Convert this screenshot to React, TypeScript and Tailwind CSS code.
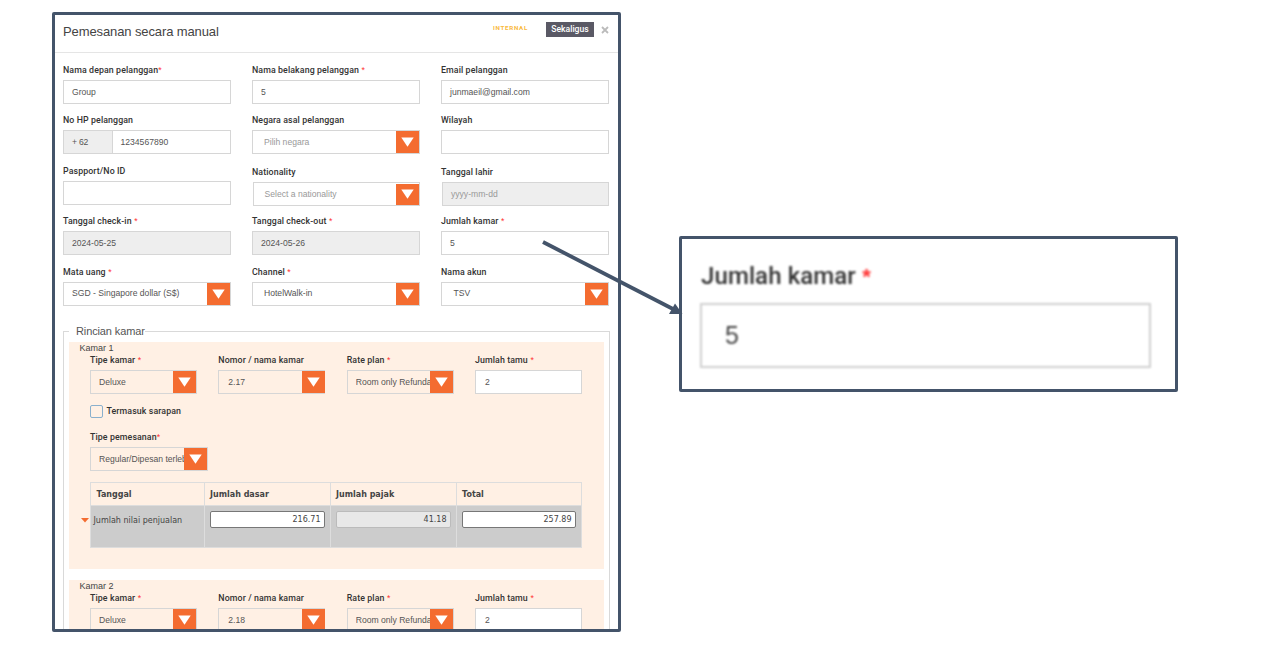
import type { ReactNode } from 'react'

interface IFieldProps {
  label: string
  star?: string
  className?: string
  children: ReactNode
}

interface IBoxProps {
  value?: string
  disabled?: boolean
  placeholder?: boolean
  className?: string
}

function Label({ label, star }: { label: string; star?: string }) {
  return (
    <div className="h-5 text-[8.8px] leading-5 font-medium whitespace-pre text-[#333] [font-family:Roboto,'Liberation_Sans',sans-serif] tracking-[0.1px]">
      {label}
      {star && (
        <span className="text-[#f33] [font-family:'Liberation_Sans',sans-serif]">
          {star}
        </span>
      )}
    </div>
  )
}

function Field({ label, star, className = '', children }: IFieldProps) {
  return (
    <div className={className}>
      <Label label={label} star={star} />
      {children}
    </div>
  )
}

function TextBox({ value, disabled, placeholder, className = '' }: IBoxProps) {
  return (
    <div
      className={`flex h-6 items-center border border-[#d6d6d6] pl-2 text-[8.6px] whitespace-pre ${
        disabled ? 'bg-[#eee]' : 'bg-white'
      } ${placeholder ? 'text-[#999]' : 'text-[#555]'} ${className}`}
    >
      {value}
    </div>
  )
}

function SelectBox({ value, placeholder, className = 'bg-white pl-2' }: IBoxProps) {
  return (
    <div
      className={`flex h-6 items-center border border-[#d6d6d6] text-[8.6px] ${
        placeholder ? 'text-[#999]' : 'text-[#555]'
      } ${className}`}
    >
      <span className="min-w-0 flex-1 overflow-hidden whitespace-nowrap">{value}</span>
      <span className="mr-[-0.5px] flex h-full w-[23px] shrink-0 items-center justify-center bg-[#f46c30]">
        <svg width="13" height="10" viewBox="0 0 13 10">
          <path d="M0.3 0.5H12.7L6.5 9.8Z" fill="#fff" />
        </svg>
      </span>
    </div>
  )
}

function Amount({ value, disabled }: IBoxProps) {
  return (
    <div
      className={`h-[17px] rounded-[2px] border pr-[3px] text-right leading-[16px] ${
        disabled ? 'border-[#bbb] bg-[#e8e8e8]' : 'border-[#777] bg-white'
      }`}
    >
      {value}
    </div>
  )
}

function Room({ title, room }: { title: string; room: string }) {
  return (
    <section className="h-[227px] bg-[#fff0e4] pr-[22px] pl-[21px]">
      <div className="-ml-[10.5px] h-[8px] text-[9px] leading-[12px] text-[#444]">{title}</div>
      <div className="grid grid-cols-4 gap-x-[21.4px]">
        <Field label="Tipe kamar" star=" *">
          <SelectBox value="Deluxe" className="pl-2" />
        </Field>
        <Field label="Nomor / nama kamar">
          <SelectBox value={room} className="pl-[9px]" />
        </Field>
        <Field label="Rate plan" star=" *">
          <SelectBox value="Room only Refundable" className="pl-2" />
        </Field>
        <Field label="Jumlah tamu" star=" *">
          <TextBox value="2" className="pl-[9px]" />
        </Field>
      </div>
      <div className="mt-[7px] flex h-[20px] items-center gap-[3.5px]">
        <span className="mt-px h-[13px] w-[13px] rounded-[2px] border border-[#8ab0cd]" />
        <Label label="Termasuk sarapan" />
      </div>
      <Field label="Tipe pemesanan" star="*" className="mt-[6.5px] w-[117.5px]">
        <SelectBox value="Regular/Dipesan terlebih dahulu" className="pl-2" />
      </Field>
      <div className="mt-[10.5px] flex text-[8px] [font-family:'DejaVu_Sans',Verdana,sans-serif]">
        <div className="-ml-[9px] flex w-[9px] shrink-0 pt-[36px]">
          <svg width="8" height="5" viewBox="0 0 8 5">
            <path d="M0 0H8L4 4.6Z" fill="#f46c30" />
          </svg>
        </div>
        <table className="w-full table-fixed border-collapse text-[#444]">
          <colgroup>
            <col className="w-[114px]" />
            <col className="w-[126px]" />
            <col className="w-[126px]" />
            <col />
          </colgroup>
          <thead>
            <tr className="h-[23px] text-left">
              <th className="border border-[#ddd] px-[5.5px] pt-[2px]">Tanggal</th>
              <th className="border border-[#ddd] px-[5px] pt-[2px]">Jumlah dasar</th>
              <th className="border border-[#ddd] px-[5px] pt-[2px]">Jumlah pajak</th>
              <th className="border border-[#ddd] px-[5px] pt-[2px]">Total</th>
            </tr>
          </thead>
          <tbody>
            <tr className="h-[42px] bg-[#ccc] align-top">
              <td className="border border-[#ddd] pt-[9px] pl-[2.5px] whitespace-nowrap">
                Jumlah nilai penjualan
              </td>
              <td className="border border-[#ddd] pt-[5.5px] pr-[5.5px] pl-[5px]">
                <Amount value="216.71" />
              </td>
              <td className="border border-[#ddd] pt-[5.5px] pr-[5.5px] pl-[5px]">
                <Amount value="41.18" disabled />
              </td>
              <td className="border border-[#ddd] pt-[5.5px] pr-[5.5px] pl-[5px]">
                <Amount value="257.89" />
              </td>
            </tr>
          </tbody>
        </table>
      </div>
    </section>
  )
}

function BookingPanel() {
  return (
    <main className="mt-3 ml-[52px] h-[620px] w-[569px] shrink-0 overflow-hidden rounded-[2px] border-3 border-[#44546a] bg-white">
      <header className="flex h-[38px] items-center border-b border-[#e5e5e5] pr-[9px] pl-2">
        <h1 className="mt-[-3px] flex-1 text-[13px] tracking-[-0.11px] text-[#444]">
          Pemesanan secara manual
        </h1>
        <span className="mt-[-9px] mr-[18px] text-[6.2px] font-bold tracking-[0.7px] text-[#f9b93c] [font-family:Roboto,sans-serif]">
          INTERNAL
        </span>
        <button className="mt-[-8px] h-[15px] w-12 bg-[#5a5965] text-[8.6px] leading-[15px] font-medium text-white [font-family:Roboto,sans-serif]">
          Sekaligus
        </button>
        <svg className="mt-[-7px] ml-[7px]" width="8" height="8" viewBox="0 0 8 8">
          <path d="M1 1L7 7M7 1L1 7" stroke="#bbb" strokeWidth="1.8" />
        </svg>
      </header>

      <div className="mt-[7px] grid auto-rows-[50.4px] grid-cols-[167.6px_167.6px_167.6px] gap-x-[21.4px] pl-2">
        <Field label="Nama depan pelanggan" star="*">
          <TextBox value="Group" />
        </Field>
        <Field label="Nama belakang pelanggan" star=" *">
          <TextBox value="5" />
        </Field>
        <Field label="Email pelanggan">
          <TextBox value="junmaeil@gmail.com" />
        </Field>

        <Field label="No HP pelanggan">
          <div className="flex">
            <TextBox value="+ 62" disabled className="w-[48.5px] border-r-0 tracking-[-0.2px]" />
            <TextBox value="1234567890" className="flex-1" />
          </div>
        </Field>
        <Field label="Negara asal pelanggan">
          <SelectBox value="Pilih negara" placeholder className="bg-white pl-[11px]" />
        </Field>
        <Field label="Wilayah">
          <TextBox />
        </Field>

        <Field label="Paspport/No ID">
          <TextBox />
        </Field>
        <Field label="Nationality" className="pt-px">
          <SelectBox
            value="Select a nationality"
            placeholder
            className="ml-px bg-white pt-px pl-[10.5px]"
          />
        </Field>
        <Field label="Tanggal lahir" className="pt-px">
          <TextBox value="yyyy-mm-dd" disabled placeholder className="ml-px pt-px" />
        </Field>

        <Field label="Tanggal check-in" star=" *">
          <TextBox value="2024-05-25" disabled />
        </Field>
        <Field label="Tanggal check-out" star=" *">
          <TextBox value="2024-05-26" disabled />
        </Field>
        <Field label="Jumlah kamar" star=" *">
          <TextBox value="5" />
        </Field>

        <Field label="Mata uang" star=" *">
          <SelectBox value="SGD - Singapore dollar (S$)" />
        </Field>
        <Field label="Channel" star=" *">
          <SelectBox value="HotelWalk-in" className="bg-white pl-[11px]" />
        </Field>
        <Field label="Nama akun">
          <SelectBox value="TSV" className="bg-white pl-[11.5px]" />
        </Field>
      </div>

      <fieldset className="mt-[12px] mr-2 ml-2 border border-[#d9d9d9] px-[5px]">
        <legend className="h-[15px] pl-[7px] text-[11px] leading-[15px] tracking-[-0.12px] text-[#555]">
          Rincian kamar
        </legend>
        <div className="flex flex-col gap-[11px] pt-[3px]">
          <Room title="Kamar 1" room="2.17" />
          <Room title="Kamar 2" room="2.18" />
        </div>
      </fieldset>
    </main>
  )
}

function Callout() {
  return (
    <aside className="mt-[236px] ml-[58px] h-[156px] w-[499px] shrink-0 rounded-[2px] border-3 border-[#44546a] bg-white pt-[20px] pl-[18px]">
      <div className="blur-[0.8px]">
        <div className="h-[44px] pl-px text-[24px] leading-[34px] font-medium tracking-[0.1px] whitespace-pre text-[#333] [font-family:Roboto,'Liberation_Sans',sans-serif]">
          Jumlah kamar
          <span className="text-[22px] font-bold text-[#f33] [font-family:'Liberation_Sans',sans-serif]"> *</span>
        </div>
        <div className="flex h-[65px] w-[451px] items-center border-2 border-[#d0d0d0] pl-[23px] text-[25px] text-[#444]">
          5
        </div>
      </div>
    </aside>
  )
}

export default function App() {
  return (
    <div className="relative flex h-[645px] w-[1279px] items-start overflow-hidden bg-white [font-family:'Liberation_Sans',Arial,sans-serif]">
      <BookingPanel />
      <Callout />
      <svg className="pointer-events-none absolute top-[236px] left-[536px]" width="150" height="84" viewBox="0 0 150 84">
        <path d="M7 6L137 73" stroke="#44546a" strokeWidth="3.8" />
        <path d="M139 67.5L146.5 78H133Z" fill="#44546a" />
      </svg>
    </div>
  )
}
